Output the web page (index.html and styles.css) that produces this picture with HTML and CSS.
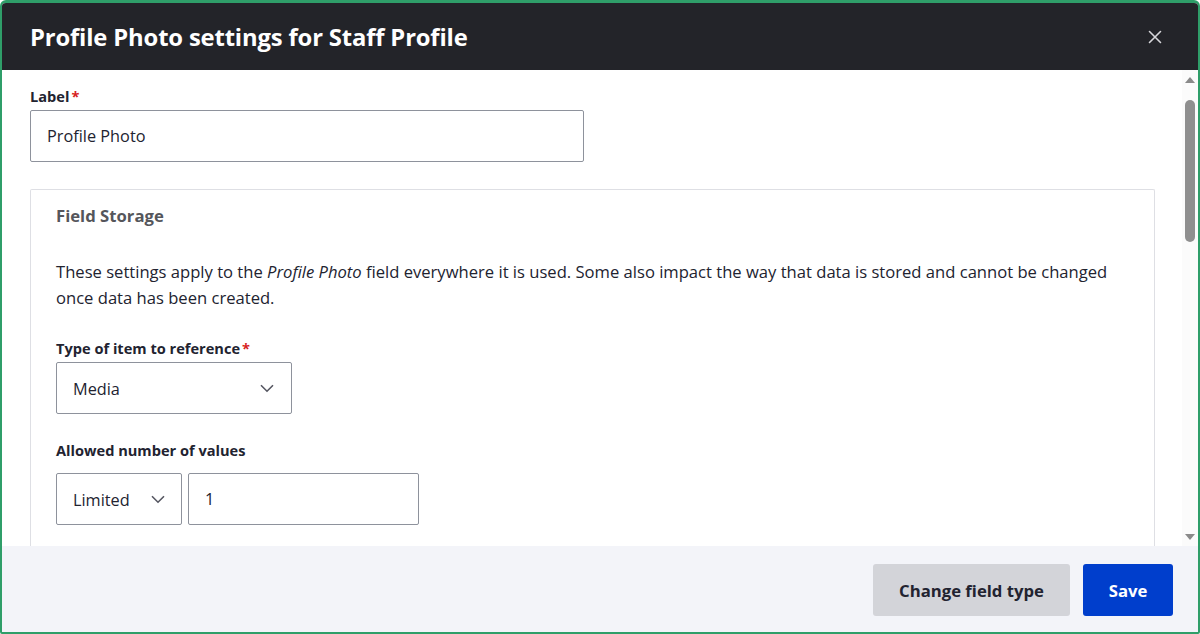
FILE: index.html
```html
<!DOCTYPE html>
<html lang="en">
<head>
<meta charset="utf-8">
<title>Profile Photo settings for Staff Profile</title>
<link rel="stylesheet" href="styles.css">
</head>
<body>
<div class="dialog">
  <header class="dialog-head">
    <h1 class="dialog-title">Profile Photo settings for Staff Profile</h1>
    <button class="dialog-close" type="button" aria-label="Close">
      <svg width="14" height="14" viewBox="0 0 14 14"><path d="M1.5 1.5l11 11M12.5 1.5l-11 11" stroke="#d6d6da" stroke-width="1.6" stroke-linecap="round" fill="none"/></svg>
    </button>
  </header>

  <div class="dialog-body">
    <div class="dialog-content">
      <div class="form-item">
        <label class="form-label">Label<span class="req">*</span></label>
        <input class="text-input label-input" type="text" value="Profile Photo">
      </div>

      <section class="card">
        <h2 class="card-title">Field Storage</h2>
        <p class="card-desc">These settings apply to the <em>Profile Photo</em> field everywhere it is used. Some also impact the way that data is stored and cannot be changed once data has been created.</p>

        <div class="form-item">
          <label class="form-label">Type of item to reference<span class="req">*</span></label>
          <div class="select type-select">
            <span>Media</span>
            <svg width="14" height="9" viewBox="0 0 14 9"><path d="M1 1.2l6 6 6-6" stroke="#545560" stroke-width="1.6" fill="none"/></svg>
          </div>
        </div>

        <div class="form-item">
          <label class="form-label cardinality-label">Allowed number of values</label>
          <div class="inline-row">
            <div class="select limit-select">
              <span>Limited</span>
              <svg width="14" height="9" viewBox="0 0 14 9"><path d="M1 1.2l6 6 6-6" stroke="#545560" stroke-width="1.6" fill="none"/></svg>
            </div>
            <input class="text-input number-input" type="text" value="1">
          </div>
        </div>
      </section>
    </div>

    <div class="scrollbar" aria-hidden="true">
      <span class="sb-arrow sb-up"></span>
      <span class="sb-track"><span class="sb-thumb"></span></span>
      <span class="sb-arrow sb-down"></span>
    </div>
  </div>

  <footer class="dialog-foot">
    <button class="btn btn-secondary" type="button">Change field type</button>
    <button class="btn btn-primary" type="button">Save</button>
  </footer>
</div>
</body>
</html>
```

FILE: styles.css
```css
* { box-sizing: border-box; }

html, body {
  margin: 0;
  height: 100%;
}

body {
  font-family: "Open Sans", "Noto Sans", sans-serif;
  color: #222330;
  background: #ffffff;
}

.dialog {
  height: 100vh;
  display: flex;
  flex-direction: column;
  border: 2px solid #2f9e69;
  border-top-width: 3px;
  border-radius: 6px 6px 2px 2px;
  overflow: hidden;
}

/* header bar */
.dialog-head {
  height: 67px;
  flex: none;
  display: flex;
  align-items: center;
  justify-content: space-between;
  padding: 0 36px 0 28px;
  background: #232429;
}

.dialog-title {
  margin: 0;
  font-size: 23.8px;
  font-weight: 700;
  color: #ffffff;
  letter-spacing: -0.15px;
}

.dialog-close {
  border: 0;
  background: none;
  padding: 0;
  width: 14px;
  height: 14px;
  display: flex;
}

/* scrolling body */
.dialog-body {
  flex: 1;
  min-height: 0;
  display: flex;
  overflow: hidden;
  background: #ffffff;
}

.dialog-content {
  flex: 1;
  padding: 16px 27px 0 28px;
}

.form-item {
  display: flex;
  flex-direction: column;
  align-items: flex-start;
}

.form-label {
  font-size: 14.6px;
  line-height: 20px;
  font-weight: 700;
  color: #222330;
  margin-bottom: 4px;
}

.req {
  color: #d72222;
  margin-left: 2px;
}

.text-input {
  height: 52px;
  border: 1px solid #8e929c;
  border-radius: 2px;
  padding: 0 16px;
  font-family: inherit;
  font-size: 16.3px;
  color: #222330;
  background: #ffffff;
}

.label-input { width: 554px; }

.card {
  margin-top: 27px;
  border: 1px solid #dedfe4;
  border-bottom: 0;
  border-radius: 2px 2px 0 0;
  padding: 14px 25px 40px;
}

.card-title {
  margin: 0;
  font-size: 16.7px;
  line-height: 24px;
  font-weight: 700;
  color: #55565b;
}

.card-desc {
  margin: 31px 0 27px;
  font-size: 16.6px;
  line-height: 26px;
}

.select {
  height: 52px;
  border: 1px solid #8e929c;
  border-radius: 2px;
  display: flex;
  align-items: center;
  justify-content: space-between;
  padding: 1px 17px 0 16px;
  font-size: 16.3px;
}

.type-select { width: 236px; }

.cardinality-label {
  margin-top: 26px;
  margin-bottom: 13px;
}

.inline-row {
  display: flex;
  gap: 6px;
}

.limit-select {
  width: 126px;
  padding-right: 16px;
}

.number-input { width: 231px; }

/* scrollbar column */
.scrollbar {
  width: 16px;
  flex: none;
  display: flex;
  flex-direction: column;
  align-items: center;
  background: #fbfbfb;
  padding: 7px 0 6px;
}

.sb-arrow {
  width: 0;
  height: 0;
  border-left: 5px solid transparent;
  border-right: 5px solid transparent;
}

.sb-up { border-bottom: 6px solid #8a8a8a; }
.sb-down { border-top: 6px solid #8a8a8a; }

.sb-track {
  flex: 1;
  display: flex;
  padding-top: 17px;
}

.sb-thumb {
  width: 10px;
  height: 142px;
  border-radius: 5px;
  background: #8f8f8f;
}

/* footer with actions */
.dialog-foot {
  height: 86px;
  flex: none;
  display: flex;
  justify-content: flex-end;
  align-items: flex-start;
  gap: 13px;
  padding: 18px 25px 0 0;
  background: #f3f4f9;
}

.btn {
  height: 52px;
  border: 0;
  border-radius: 3px;
  font-family: inherit;
  font-size: 16.7px;
  font-weight: 700;
  padding: 0;
  white-space: nowrap;
  text-align: center;
}

.btn-secondary {
  width: 197px;
  background: #d3d4d9;
  color: #222330;
}

.btn-primary {
  width: 90px;
  background: #003ecc;
  color: #ffffff;
}
```
